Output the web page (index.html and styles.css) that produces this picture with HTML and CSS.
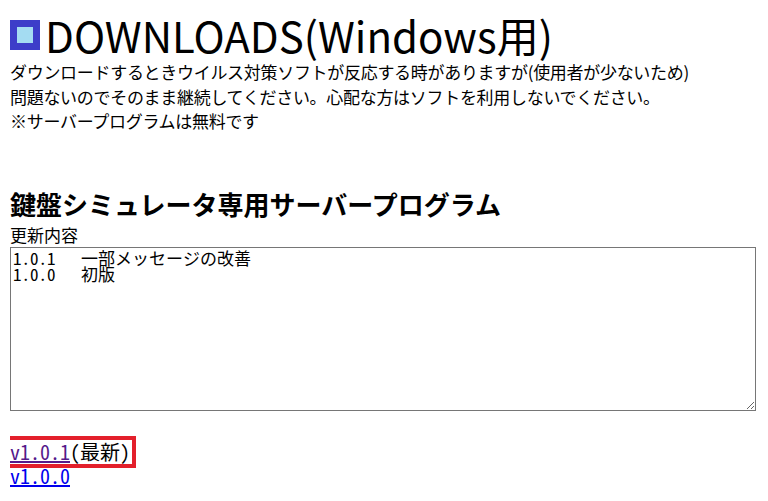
FILE: index.html
```html
<html>
<head>
  <meta charset="utf-8">
  <title>DOWNLOADS</title>
  <link rel="stylesheet" href="styles.css">
</head>
<body>

<h1><span class="mark"></span>DOWNLOADS(Windows用)</h1>
<p class="note">
  ダウンロードするときウイルス対策ソフトが反応する時がありますが(使用者が少ないため)<br>
  問題ないのでそのまま継続してください。心配な方はソフトを利用しないでください。<br>
  ※サーバープログラムは無料です
</p>

<h2>鍵盤シミュレータ専用サーバープログラム</h2>
<div class="label">更新内容</div>
<textarea class="history" readonly>1.0.1	一部メッセージの改善
1.0.0	初版</textarea>

<div class="links">
  <span class="latest"><a href="#" class="visited">v1.0.1</a>(最新)</span><br>
  <a href="#">v1.0.0</a>
</div>

</body>
</html>
```

FILE: styles.css
```css
body {
  margin: 0 10px;
  font-family: "Noto Sans CJK JP", "Noto Sans", sans-serif;
  font-size: 17px;
  color: #000;
  background: #fff;
}
h1 {
  margin: 10px 0 0 0;
  font-size: 42px;
  font-weight: normal;
  line-height: 50px;
  display: flex;
  align-items: center;
}
.mark {
  width: 16px;
  height: 16px;
  background: #a4dcf2;
  border: 7px solid #3d3dc9;
  margin-right: 5px;
}
.note {
  margin: 0;
  line-height: 24.5px;
  letter-spacing: -0.3px;
}
h2 {
  margin: 52px 0 1px 0;
  font-size: 26px;
  line-height: 36px;
  font-weight: bold;
}
.label {
  line-height: 24px;
}
.history {
  display: block;
  box-sizing: border-box;
  width: 746px;
  height: 164px;
  margin: 0;
  padding: 2px;
  border: 1px solid #767676;
  font-family: "Noto Sans Mono CJK JP", "Liberation Mono", monospace;
  font-size: 17px;
  line-height: 16px;
  tab-size: 8;
  color: #000;
  resize: both;
}
.links {
  margin-top: 29px;
  font-family: "Noto Sans Mono CJK JP", "Liberation Mono", monospace;
  font-size: 20px;
  line-height: 24px;
}
.latest {
  display: inline-block;
  outline: 4px solid #e3202b;
  padding-right: 2px;
}
.links a {
  color: #0000ee;
}
.links a.visited {
  color: #551a8b;
}
```
